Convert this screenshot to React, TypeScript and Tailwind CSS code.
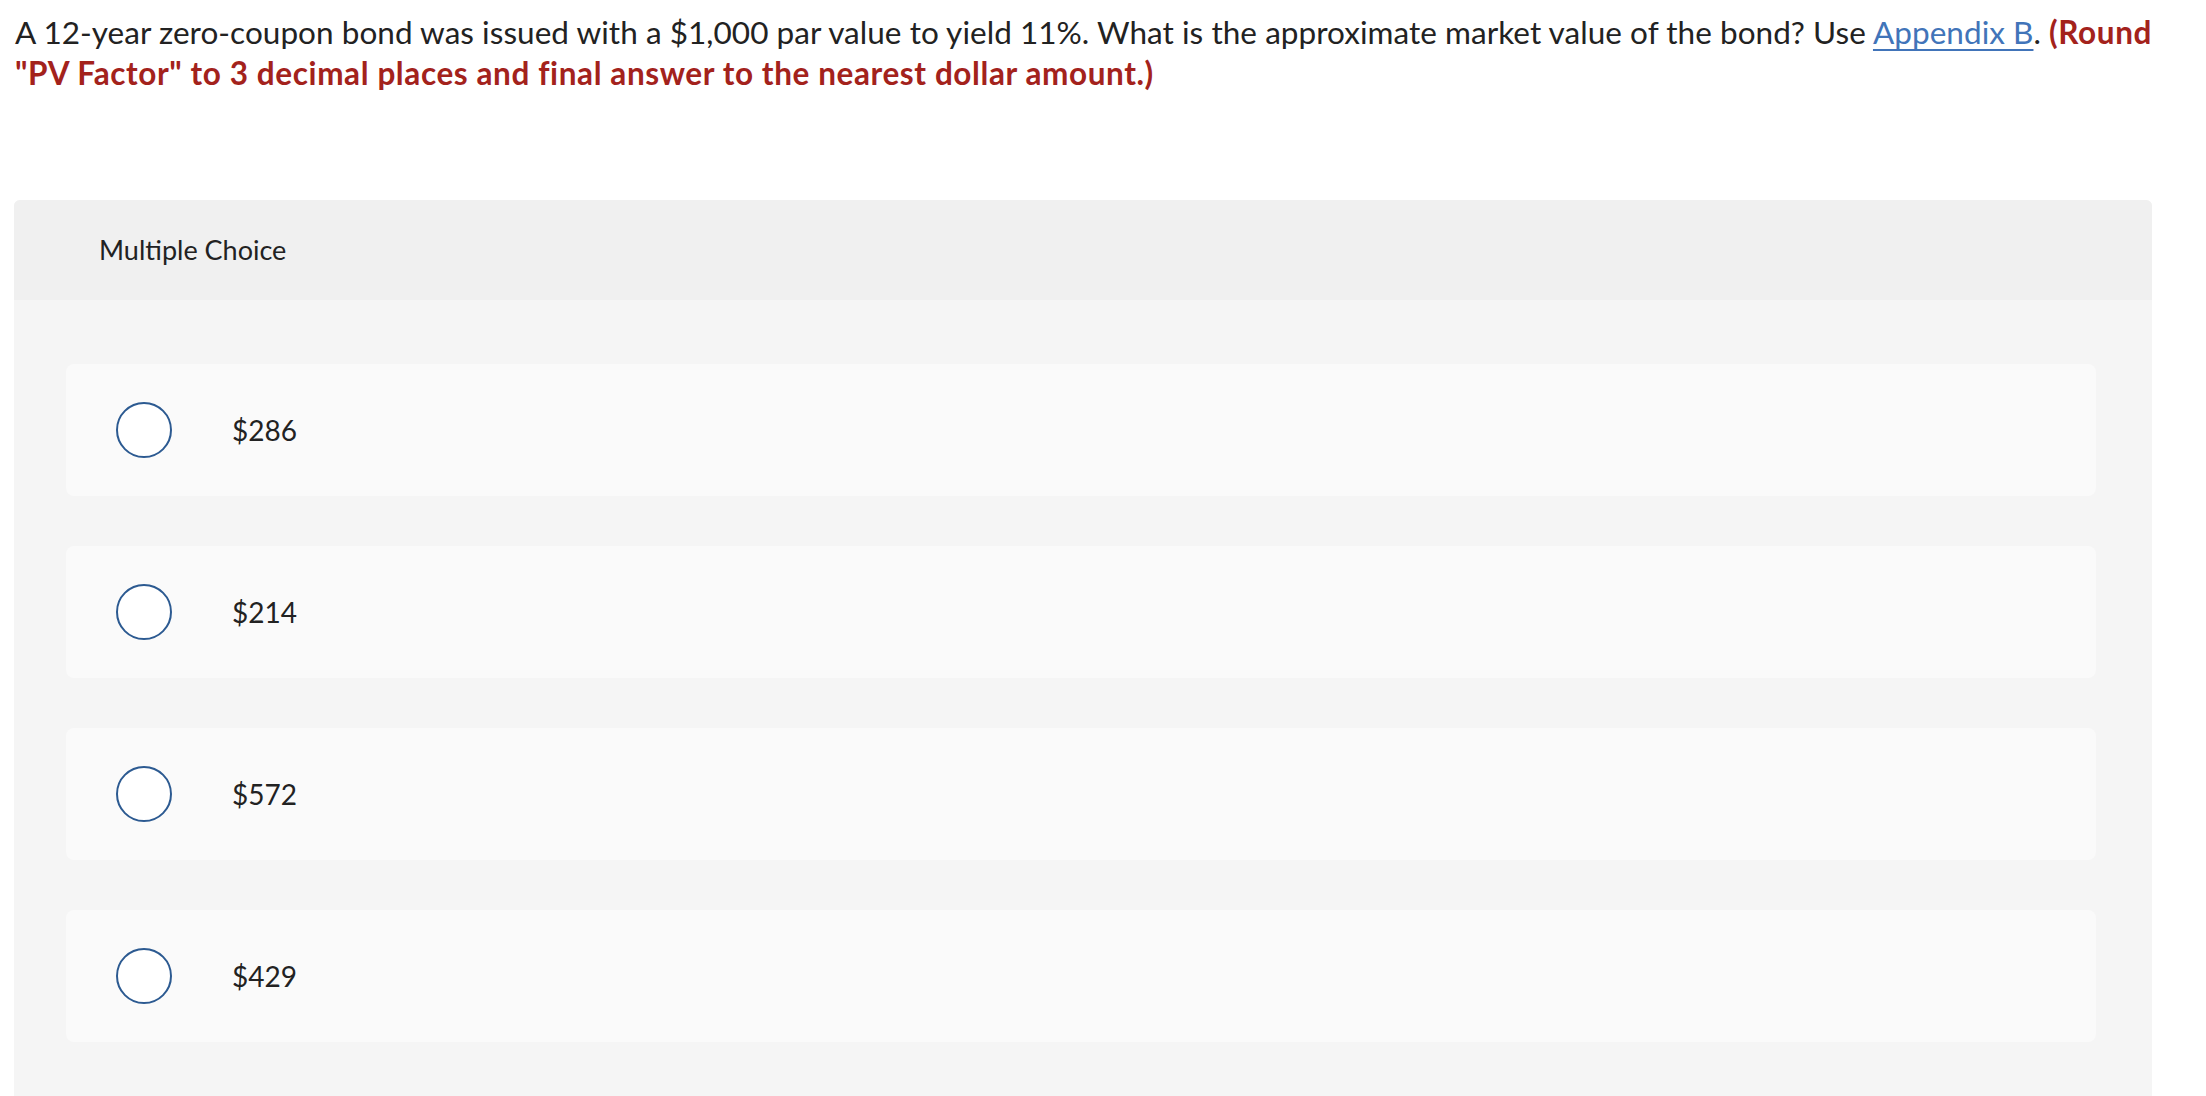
const OPTIONS = ["$286", "$214", "$572", "$429"];

export default function App() {
  return (
    <div
      className="min-h-screen bg-white text-[#222222]"
      style={{ fontFamily: "Lato, 'Liberation Sans', sans-serif" }}
    >
      {/* Question */}
      <p className="px-[15px] pt-[12px] text-[31.5px] leading-[41px] tracking-[0.04px]">
        A 12-year zero-coupon bond was issued with a $1,000 par value to yield 11%. What is the approximate
        market value of the bond? Use{" "}
        <a href="#" className="text-[#4174b9] underline underline-offset-[5px] decoration-[2px]">
          Appendix B
        </a>
        .{" "}
        <strong className="font-bold tracking-[0.6px] text-[#a3221c]">
          (Round
          <br />
          "PV Factor" to 3 decimal places and final answer to the nearest dollar amount.)
        </strong>
      </p>

      {/* Multiple choice panel */}
      <section className="mx-[14px] mt-[106px] w-[2138px] rounded-t-[6px] bg-[#f5f5f5]">
        <header className="flex h-[100px] items-center rounded-t-[6px] bg-[#f0f0f0] pl-[85px]">
          <span className="text-[27px]">Multiple Choice</span>
        </header>

        <ul className="flex flex-col gap-[50px] pl-[52px] pr-[56px] pt-[64px] pb-[64px]">
          {OPTIONS.map((opt) => (
            <li
              key={opt}
              className="flex h-[132px] items-center rounded-[8px] bg-[#fafafa] pl-[50px]"
            >
              <span className="h-[56px] w-[56px] shrink-0 rounded-full border-2 border-[#2c5a91] bg-white" />
              <span className="ml-[60px] text-[28px]">{opt}</span>
            </li>
          ))}
        </ul>
      </section>
    </div>
  );
}
